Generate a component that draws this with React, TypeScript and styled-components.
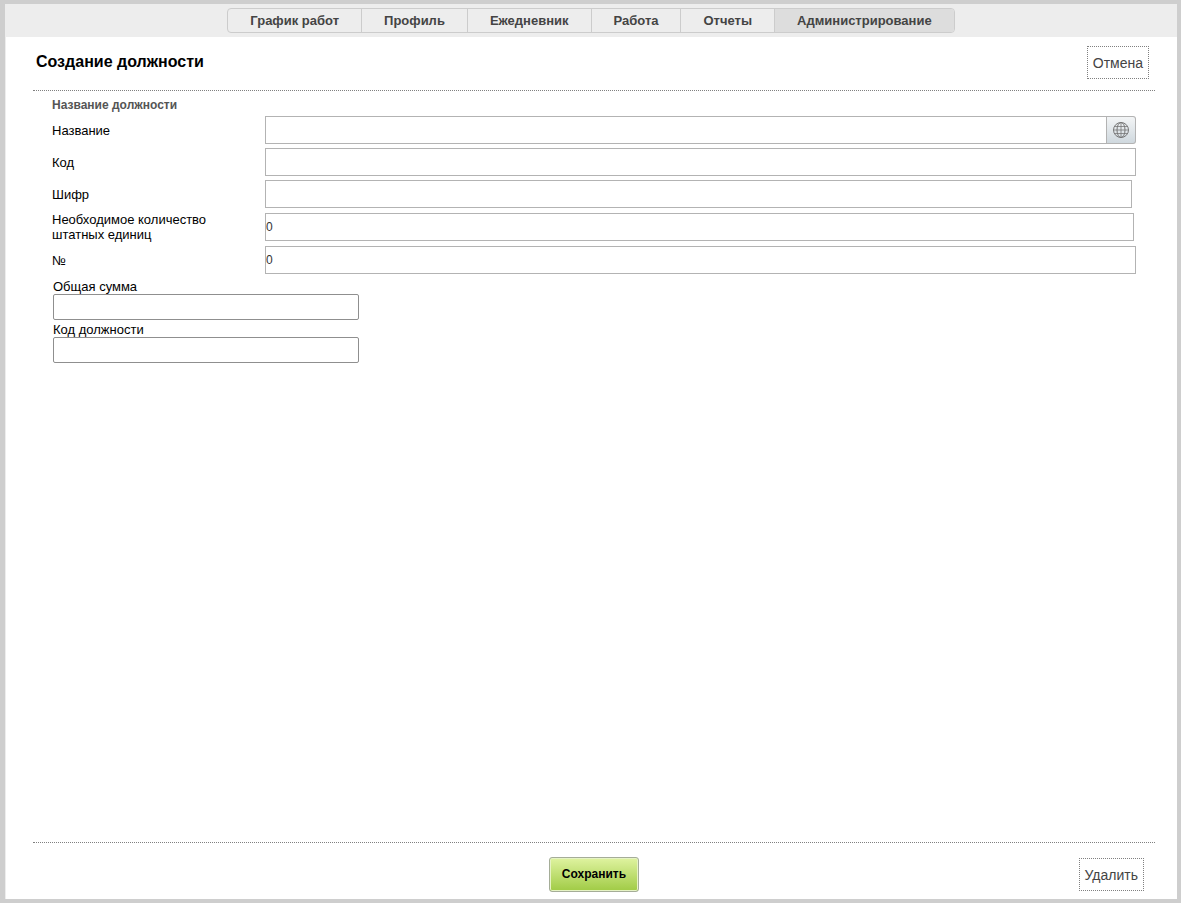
import React from "react";
import styled, { createGlobalStyle } from "styled-components";

const GlobalStyle = createGlobalStyle`
  *, *::before, *::after { box-sizing: border-box; }
  body {
    margin: 0;
    background: #fff;
    color: #000;
    font-family: "Liberation Sans", Arial, sans-serif;
    font-size: 13px;
  }
  button, input { font-family: inherit; }
`;

const Page = styled.div`
  display: flex;
  flex-direction: column;
  min-height: 100vh;
  border: 4px solid #cecece;
  border-left-width: 5px;
`;

const TopBar = styled.nav`
  display: flex;
  justify-content: center;
  padding: 4px 0;
  background: #ededed;
`;

const TabList = styled.ul`
  display: flex;
  margin: 0;
  padding: 0;
  list-style: none;
  border: 1px solid #ccc;
  border-radius: 4px;
  overflow: hidden;
`;

const TabItem = styled.li`
  & + & {
    border-left: 1px solid #ccc;
  }
`;

const Tab = styled.a<{ $active?: boolean }>`
  display: block;
  padding: 0 22px;
  line-height: 23px;
  font-weight: bold;
  color: #444;
  text-decoration: none;
  background: ${(p) => (p.$active ? "#ddd" : "transparent")};
`;

const Main = styled.main`
  flex: 1;
  display: flex;
  flex-direction: column;
  padding: 0 22px 0 27px;
  border-left: 1px solid #ededed;
`;

const Header = styled.header`
  display: flex;
  justify-content: space-between;
  align-items: center;
  padding: 9px 6px 11px 3px;
  border-bottom: 1px dotted #808080;
`;

const Title = styled.h1`
  margin: 0;
  font-size: 16px;
  line-height: 18px;
  padding-bottom: 2px;
`;

const OutlineButton = styled.button`
  height: 33px;
  padding: 0 5px;
  border: 1px dotted #808080;
  background: transparent;
  color: #444;
  font-size: 14px;
  cursor: pointer;
`;

const Form = styled.form`
  flex: 1;
  display: flex;
  flex-direction: column;
`;

const Fields = styled.div`
  flex: 1;
  padding: 0 19px;
`;

const SectionTitle = styled.h2`
  margin: 0;
  padding-top: 4px;
  font-size: 12px;
  line-height: 21px;
  color: #555;
`;

const Rows = styled.div`
  display: grid;
  gap: 4px;
`;

const Row = styled.div`
  display: grid;
  grid-template-columns: 213px 1fr;
  align-items: center;
`;

const RowLabel = styled.label`
  padding-right: 40px;
  line-height: 15px;
`;

const Control = styled.div<{ $inset?: number }>`
  display: flex;
  height: 28px;
  margin-right: ${(p) => p.$inset ?? 0}px;
`;

const TextInput = styled.input`
  flex: 1;
  min-width: 0;
  padding: 0;
  border: 1px solid #b3b3b3;
  border-radius: 0;
  background: #fff;
  color: #333;
  font-size: 12px;
`;

const LanguageButton = styled.button`
  display: flex;
  align-items: center;
  justify-content: center;
  width: 29px;
  padding: 0;
  border: 1px solid #b3b3b3;
  border-left: 0;
  border-radius: 0 3px 3px 0;
  background: linear-gradient(#f3f5f6, #cfd8de);
  color: #777;
  cursor: pointer;
`;

const ExtraFields = styled.div`
  display: grid;
  gap: 2px;
  padding: 5px 1px;
`;

const ExtraField = styled.div`
  display: flex;
  flex-direction: column;
  align-items: flex-start;
`;

const ExtraLabel = styled.label`
  line-height: 15px;
`;

const ExtraInput = styled.input`
  width: 306px;
  max-width: 100%;
  height: 26px;
  padding: 0 3px;
  border: 1px solid #8f8f8f;
  border-radius: 2px;
  background: #fff;
  font-size: 13px;
`;

const Footer = styled.footer`
  display: grid;
  grid-template-columns: 1fr auto 1fr;
  align-items: center;
  padding: 14px 0 7px;
  border-top: 1px dotted #808080;
`;

const SaveButton = styled.button`
  grid-column: 2;
  height: 35px;
  padding: 0 12px 2px;
  border: 1px solid #a5ad98;
  border-radius: 3px;
  background: linear-gradient(#dff3a0, #a0cb45);
  box-shadow: inset 0 0 0 1px #e6f3c4;
  color: #000;
  font-size: 12px;
  font-weight: bold;
  cursor: pointer;
`;

const FooterEnd = styled.div`
  display: flex;
  justify-content: flex-end;
  padding-right: 11px;
`;

const GlobeIcon = () => (
  <svg width="16" height="16" viewBox="0 0 16 16" fill="none" stroke="currentColor" aria-hidden="true">
    <circle cx="8" cy="8" r="7.5" />
    <ellipse cx="8" cy="8" rx="4" ry="7.5" />
    <path d="M8 .5v15M.5 8h15M2 4.5h12M2 11.5h12" strokeWidth="0.8" />
  </svg>
);

const tabs = ["График работ", "Профиль", "Ежедневник", "Работа", "Отчеты", "Администрирование"];

const rows = [
  { id: "name", label: "Название", value: "", inset: 0, localized: true },
  { id: "code", label: "Код", value: "", inset: 0 },
  { id: "cipher", label: "Шифр", value: "", inset: 4 },
  { id: "units", label: "Необходимое количество штатных единиц", value: "0", inset: 2 },
  { id: "number", label: "№", value: "0", inset: 0 },
];

const extras = [
  { id: "total", label: "Общая сумма" },
  { id: "position-code", label: "Код должности" },
];

export default function App() {
  return (
    <>
      <GlobalStyle />
      <Page>
        <TopBar>
          <TabList>
            {tabs.map((tab) => (
              <TabItem key={tab}>
                <Tab href="#" $active={tab === "Администрирование"}>
                  {tab}
                </Tab>
              </TabItem>
            ))}
          </TabList>
        </TopBar>
        <Main>
          <Header>
            <Title>Создание должности</Title>
            <OutlineButton type="button">Отмена</OutlineButton>
          </Header>
          <Form onSubmit={(e) => e.preventDefault()}>
            <Fields>
              <SectionTitle>Название должности</SectionTitle>
              <Rows>
                {rows.map((row) => (
                  <Row key={row.id}>
                    <RowLabel htmlFor={row.id}>{row.label}</RowLabel>
                    <Control $inset={row.inset}>
                      <TextInput id={row.id} type="text" defaultValue={row.value} />
                      {row.localized && (
                        <LanguageButton type="button" aria-label="Перевод">
                          <GlobeIcon />
                        </LanguageButton>
                      )}
                    </Control>
                  </Row>
                ))}
              </Rows>
              <ExtraFields>
                {extras.map((field) => (
                  <ExtraField key={field.id}>
                    <ExtraLabel htmlFor={field.id}>{field.label}</ExtraLabel>
                    <ExtraInput id={field.id} type="text" />
                  </ExtraField>
                ))}
              </ExtraFields>
            </Fields>
            <Footer>
              <SaveButton type="submit">Сохранить</SaveButton>
              <FooterEnd>
                <OutlineButton type="button">Удалить</OutlineButton>
              </FooterEnd>
            </Footer>
          </Form>
        </Main>
      </Page>
    </>
  );
}
